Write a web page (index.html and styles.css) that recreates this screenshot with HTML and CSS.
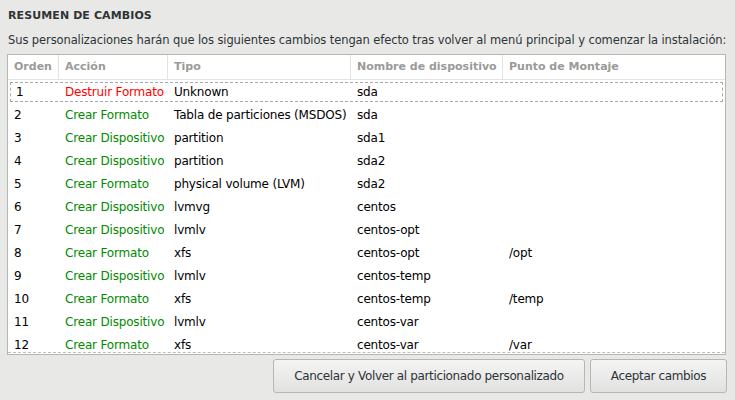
FILE: index.html
```html
<!DOCTYPE html>
<html lang="es">
<head>
<meta charset="utf-8">
<link rel="stylesheet" href="styles.css">
</head>
<body>
<div class="dialog">
  <h1 class="title">RESUMEN DE CAMBIOS</h1>
  <p class="subtitle">Sus personalizaciones harán que los siguientes cambios tengan efecto tras volver al menú principal y comenzar la instalación:</p>
  <div class="table-box">
    <div class="row head">
      <div class="c c1">Orden</div>
      <div class="c c2">Acción</div>
      <div class="c c3">Tipo</div>
      <div class="c c4">Nombre de dispositivo</div>
      <div class="c c5">Punto de Montaje</div>
    </div>
    <div class="body">
      <div class="row focus"><div class="c c1">1</div><div class="c c2 red">Destruir Formato</div><div class="c c3">Unknown</div><div class="c c4">sda</div><div class="c c5"></div></div>
      <div class="row"><div class="c c1">2</div><div class="c c2 green">Crear Formato</div><div class="c c3">Tabla de particiones (MSDOS)</div><div class="c c4">sda</div><div class="c c5"></div></div>
      <div class="row"><div class="c c1">3</div><div class="c c2 green">Crear Dispositivo</div><div class="c c3">partition</div><div class="c c4">sda1</div><div class="c c5"></div></div>
      <div class="row"><div class="c c1">4</div><div class="c c2 green">Crear Dispositivo</div><div class="c c3">partition</div><div class="c c4">sda2</div><div class="c c5"></div></div>
      <div class="row"><div class="c c1">5</div><div class="c c2 green">Crear Formato</div><div class="c c3">physical volume (LVM)</div><div class="c c4">sda2</div><div class="c c5"></div></div>
      <div class="row"><div class="c c1">6</div><div class="c c2 green">Crear Dispositivo</div><div class="c c3">lvmvg</div><div class="c c4">centos</div><div class="c c5"></div></div>
      <div class="row"><div class="c c1">7</div><div class="c c2 green">Crear Dispositivo</div><div class="c c3">lvmlv</div><div class="c c4">centos-opt</div><div class="c c5"></div></div>
      <div class="row"><div class="c c1">8</div><div class="c c2 green">Crear Formato</div><div class="c c3">xfs</div><div class="c c4">centos-opt</div><div class="c c5">/opt</div></div>
      <div class="row"><div class="c c1">9</div><div class="c c2 green">Crear Dispositivo</div><div class="c c3">lvmlv</div><div class="c c4">centos-temp</div><div class="c c5"></div></div>
      <div class="row"><div class="c c1">10</div><div class="c c2 green">Crear Formato</div><div class="c c3">xfs</div><div class="c c4">centos-temp</div><div class="c c5">/temp</div></div>
      <div class="row"><div class="c c1">11</div><div class="c c2 green">Crear Dispositivo</div><div class="c c3">lvmlv</div><div class="c c4">centos-var</div><div class="c c5"></div></div>
      <div class="row"><div class="c c1">12</div><div class="c c2 green">Crear Formato</div><div class="c c3">xfs</div><div class="c c4">centos-var</div><div class="c c5">/var</div></div>
    </div>
    <div class="undershoot"></div>
  </div>
  <div class="buttons">
    <button class="btn btn-cancel">Cancelar y Volver al particionado personalizado</button>
    <button class="btn btn-accept">Aceptar cambios</button>
  </div>
</div>
</body>
</html>
```
FILE: styles.css
```css
html, body {
  margin: 0;
  padding: 0;
  background: #e8e8e7;
}
body {
  font-family: "DejaVu Sans", sans-serif;
  font-size: 12px;
  color: #2e3436;
  width: 735px;
  height: 400px;
  overflow: hidden;
}
.dialog {
  padding: 8px 7px 0 7px;
}
.title {
  margin: 0 0 0 1px;
  font-size: 11px;
  font-weight: bold;
  letter-spacing: 0.1px;
  line-height: 16px;
}
.subtitle {
  margin: 8px 0 0 1px;
  line-height: 16px;
  white-space: nowrap;
  font-size: 11.5px;
  letter-spacing: -0.1px;
}
.table-box {
  position: relative;
  margin-top: 6px;
  width: 717px;
  height: 299px;
  border: 1px solid #b6b6b3;
  background: #ffffff;
  overflow: hidden;
}
.row {
  position: relative;
  display: grid;
  grid-template-columns: 51px 109px 183px 152px 1fr;
  height: 23px;
  align-items: center;
  color: #000;
  letter-spacing: -0.18px;
}
.row.head {
  height: 24px;
  border-bottom: 1px solid #e3e3e1;
  color: #9a9a98;
  font-weight: bold;
  font-size: 11px;
  letter-spacing: 0;
}
.row.head .c {
  border-right: 1px solid #e3e3e1;
  height: 24px;
  line-height: 24px;
}
.row.head .c5 { border-right: none; }
.c {
  padding-left: 6px;
  white-space: nowrap;
  overflow: hidden;
}
.row.focus {
  margin: 0 2px;
  grid-template-columns: 49px 109px 183px 152px 1fr;
}
.row.focus::after {
  content: "";
  position: absolute;
  left: 0;
  right: 0;
  top: 2px;
  bottom: 1px;
  border: 1px dashed #a8a8a8;
  pointer-events: none;
}
.red { color: #ff0000; }
.green { color: #008a00; }
.undershoot {
  position: absolute;
  left: 0;
  right: 0;
  bottom: 1px;
  border-top: 1px dashed #bdbdbb;
}
.buttons {
  display: flex;
  justify-content: flex-end;
  gap: 5px;
  margin-top: 4px;
  padding-right: 1px;
}
.btn {
  font-family: "DejaVu Sans", sans-serif;
  font-size: 12px;
  letter-spacing: -0.35px;
  color: #2e3436;
  height: 34px;
  border: 1px solid #b6b6b3;
  border-radius: 3px;
  background: linear-gradient(#f4f4f4, #e1e1e0);
  padding: 0;
}
.btn-cancel { width: 312px; }
.btn-accept { width: 137px; }
```
